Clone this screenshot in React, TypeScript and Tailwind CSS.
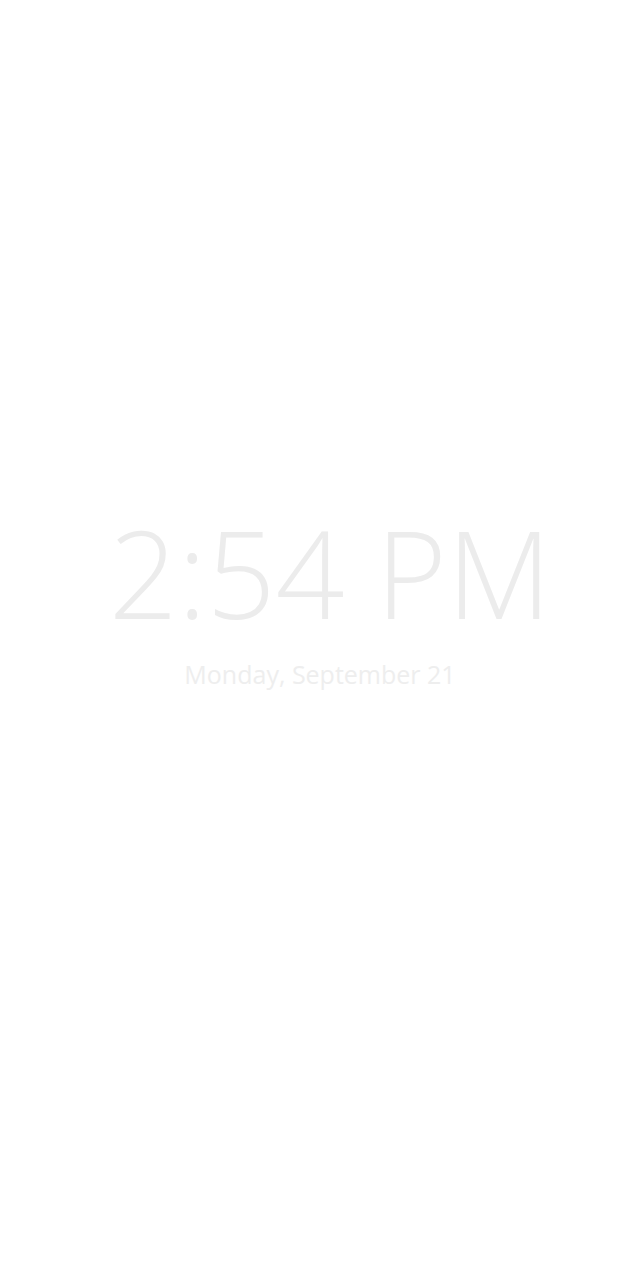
export default function App() {
  return (
    <div className="w-full h-[1280px] bg-white flex flex-col items-center justify-center pb-[82px]" style={{ fontFamily: '"Open Sans", sans-serif' }}>
      <div className="text-[121px] font-light leading-none text-[#ececec] pl-[20px]">2:54 PM</div>
      <div className="text-[25px] font-normal leading-none text-[#eeeeee] mt-[29px]">Monday, September 21</div>
    </div>
  );
}
